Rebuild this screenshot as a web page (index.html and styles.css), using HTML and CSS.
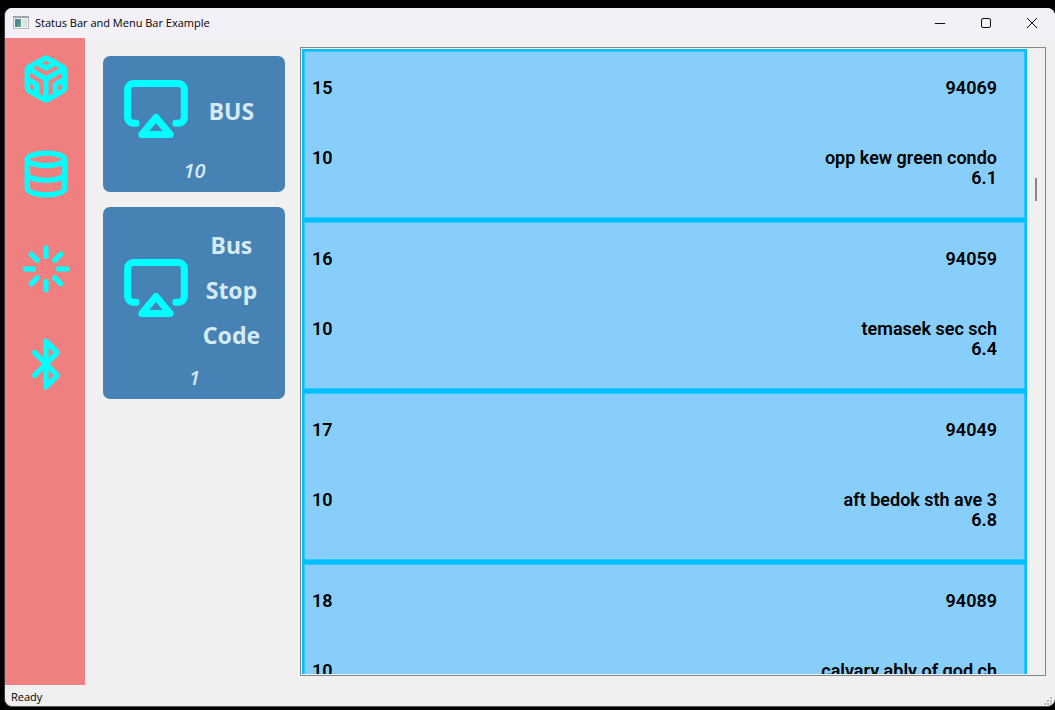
FILE: index.html
```html
<!DOCTYPE html>
<html lang="en">
<head>
<meta charset="utf-8">
<meta name="viewport" content="width=device-width, initial-scale=1">
<title>Status Bar and Menu Bar Example</title>
<link rel="stylesheet" href="styles.css">
</head>
<body>
<div class="window">
  <header class="titlebar">
    <svg class="app-icon" width="16" height="16" viewBox="0 0 16 16" aria-hidden="true">
      <rect x="0.5" y="1.5" width="15" height="12" fill="#f4f6f6" stroke="#b4b6bc"/>
      <path d="M0 2h16" stroke="#9fa3ad" stroke-width="2"/>
      <rect x="2" y="4" width="6" height="8" fill="#4c8c8c"/>
      <path d="M2 4h4l-4 6z" fill="#4a7fa8"/>
      <path d="M8 4v8H4z" fill="#5fa37c"/>
      <rect x="9" y="4" width="3" height="8" fill="#e0e4e4"/>
      <rect x="12" y="4" width="2" height="8" fill="#cfe0d8"/>
    </svg>
    <h1 class="title">Status Bar and Menu Bar Example</h1>
    <div class="window-buttons">
      <button class="window-button" aria-label="Minimize"><svg width="10" height="10" viewBox="0 0 10 10"><path d="M0 5.5h10"/></svg></button>
      <button class="window-button" aria-label="Maximize"><svg width="10" height="10" viewBox="0 0 10 10"><rect x=".5" y=".5" width="9" height="9" rx="1.5"/></svg></button>
      <button class="window-button" aria-label="Close"><svg width="10" height="10" viewBox="0 0 10 10"><path d="M0 0l10 10M10 0L0 10"/></svg></button>
    </div>
  </header>
  <main class="content">
    <nav class="sidebar" aria-label="Tools">
      <button class="tool" aria-label="Sandbox"><svg class="icon" viewBox="0 0 24 24"><path d="M21 16V8a2 2 0 0 0-1-1.73l-7-4a2 2 0 0 0-2 0l-7 4A2 2 0 0 0 3 8v8a2 2 0 0 0 1 1.73l7 4a2 2 0 0 0 2 0l7-4A2 2 0 0 0 21 16z"/><path d="M7.5 4.21L12 6.81l4.5-2.6M7.5 19.79V14.6L3 12M21 12l-4.5 2.6v5.19M3.27 6.96L12 12.01l8.73-5.05M12 22.08V12"/></svg></button>
      <button class="tool" aria-label="Database"><svg class="icon" viewBox="0 0 24 24"><ellipse cx="12" cy="5" rx="9" ry="3"/><path d="M21 12c0 1.66-4 3-9 3s-9-1.34-9-3"/><path d="M3 5v14c0 1.66 4 3 9 3s9-1.34 9-3V5"/></svg></button>
      <button class="tool" aria-label="Loading"><svg class="icon" viewBox="0 0 24 24"><path d="M12 2v4M12 18v4M4.93 4.93l2.83 2.83M16.24 16.24l2.83 2.83M2 12h4M18 12h4M4.93 19.07l2.83-2.83M16.24 7.76l2.83-2.83"/></svg></button>
      <button class="tool" aria-label="Bluetooth"><svg class="icon" viewBox="0 0 24 24"><path d="M6.5 6.5l11 11L12 23V1l5.5 5.5-11 11"/></svg></button>
    </nav>
    <section class="cards" aria-label="Summary">
      <article class="card">
        <div class="card-head">
          <svg class="card-icon" viewBox="0 0 24 24" aria-hidden="true"><path d="M5 17H4a2 2 0 0 1-2-2V5a2 2 0 0 1 2-2h16a2 2 0 0 1 2 2v10a2 2 0 0 1-2 2h-1"/><path d="M12 15l5 6H7z"/></svg>
          <h2 class="card-title">BUS</h2>
        </div>
        <p class="card-value">10</p>
      </article>
      <article class="card">
        <div class="card-head">
          <svg class="card-icon" viewBox="0 0 24 24" aria-hidden="true"><path d="M5 17H4a2 2 0 0 1-2-2V5a2 2 0 0 1 2-2h16a2 2 0 0 1 2 2v10a2 2 0 0 1-2 2h-1"/><path d="M12 15l5 6H7z"/></svg>
          <h2 class="card-title">Bus Stop Code</h2>
        </div>
        <p class="card-value">1</p>
      </article>
    </section>
    <section class="list-frame" aria-label="Stops">
      <ul class="stops">
        <li class="stop"><span>15</span><span class="code">94069</span><span>10</span><span class="place">opp kew green condo<br>6.1</span></li>
        <li class="stop"><span>16</span><span class="code">94059</span><span>10</span><span class="place">temasek sec sch<br>6.4</span></li>
        <li class="stop"><span>17</span><span class="code">94049</span><span>10</span><span class="place">aft bedok sth ave 3<br>6.8</span></li>
        <li class="stop"><span>18</span><span class="code">94089</span><span>10</span><span class="place">calvary ably of god ch</span></li>
      </ul>
      <div class="scrollbar"><div class="thumb"></div></div>
    </section>
  </main>
  <footer class="statusbar">
    <span>Ready</span>
    <svg width="8" height="8" viewBox="0 0 8 8" fill="#bfbfbf" aria-hidden="true"><path d="M6 0h2v2H6zM3 3h2v2H3zM6 3h2v2H6zM0 6h2v2H0zM3 6h2v2H3zM6 6h2v2H6z"/></svg>
  </footer>
</div>
</body>
</html>
```

FILE: styles.css
```css
* {
  box-sizing: border-box;
}

body {
  margin: 0;
  height: 100vh;
  padding: 8px 0 3px 4px;
  background: #020203;
  color: #000;
  font-family: "Noto Sans", "Open Sans", sans-serif;
  font-size: 12px;
}

h1, h2, p, ul {
  margin: 0;
  padding: 0;
}

button {
  padding: 0;
  border: 0;
  background: none;
}

.window {
  display: flex;
  flex-direction: column;
  height: 100%;
  overflow: hidden;
  border-left: 1px solid #3a3a3c;
  border-bottom: 1px solid #555;
  border-radius: 8px;
  background: #f0f0f0;
}

.titlebar {
  display: flex;
  flex: none;
  align-items: center;
  gap: 6px;
  height: 30px;
  padding: 0 0 1px 8px;
  background: #f3f0f8;
}

.title {
  flex: 1;
  font-family: "Open Sans", sans-serif;
  font-size: 11px;
  font-weight: 400;
}

.window-buttons {
  display: flex;
}

.window-button {
  display: grid;
  place-items: center;
  width: 46px;
  height: 28px;
}

.window-button svg {
  fill: none;
  stroke: #111;
  stroke-width: 1;
  overflow: visible;
}

.content {
  display: flex;
  flex: 1;
  min-height: 0;
}

.sidebar {
  display: flex;
  flex: none;
  flex-direction: column;
  align-items: center;
  gap: 45px;
  width: 80px;
  padding: 16px 0 0 2px;
  background: #f08080;
}

.tool {
  width: 50px;
  height: 50px;
}

.icon,
.card-icon {
  display: block;
  overflow: visible;
  fill: none;
  stroke: #0ff;
  stroke-width: 2.5;
  stroke-linecap: round;
  stroke-linejoin: round;
}

.icon {
  width: 50px;
  height: 50px;
}

.cards {
  display: flex;
  flex: none;
  flex-direction: column;
  gap: 15px;
  width: 182px;
  margin: 18px 15px 0 18px;
}

.card {
  padding: 16px 20px 6px 19px;
  border-radius: 7px;
  background: #4682b4;
  color: #d6eaf3;
}

.card-head {
  display: flex;
  align-items: center;
  gap: 8px;
  min-height: 79px;
}

.card-icon {
  flex: none;
  width: 68px;
  height: 68px;
  margin-bottom: 5px;
}

.card-title {
  flex: 1;
  font-family: "Noto Sans", sans-serif;
  font-size: 23px;
  font-weight: 700;
  line-height: 45px;
  text-align: center;
}

.card-value {
  padding: 5px 0 0 2px;
  font-family: "Open Sans", sans-serif;
  font-size: 20px;
  font-style: italic;
  font-weight: 600;
  line-height: 30px;
  text-align: center;
}

.list-frame {
  display: flex;
  flex: 1;
  min-width: 0;
  margin: 9px 9px 9px 0;
  padding: 1px 0 1px 1px;
  overflow: hidden;
  border: 1px solid #828790;
}

.stops {
  flex: 1;
  overflow: hidden;
  list-style: none;
}

.stop {
  display: grid;
  grid-template-columns: auto 1fr;
  align-content: start;
  row-gap: 50px;
  height: 171px;
  padding: 27px 28px 0 8px;
  border: 2px solid #00bfff;
  box-shadow: inset 0 0 0 1px #30c5fd;
  background: #87cefa;
  font-family: Roboto, sans-serif;
  font-size: 18px;
  font-weight: 600;
  line-height: 20px;
}

.code,
.place {
  text-align: right;
}

.scrollbar {
  flex: none;
  width: 18px;
  padding: 129px 8px 0;
}

.thumb {
  width: 2px;
  height: 23px;
  background: #868686;
}

.statusbar {
  display: flex;
  flex: none;
  align-items: flex-end;
  justify-content: space-between;
  height: 21px;
  padding: 0 3px 1px 6px;
  font-family: "Open Sans", sans-serif;
  font-size: 11px;
  line-height: 16px;
}
```
